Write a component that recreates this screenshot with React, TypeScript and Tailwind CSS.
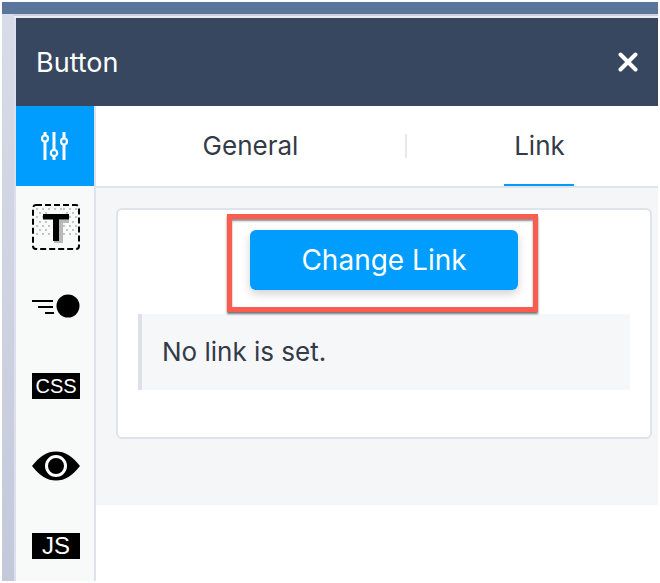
import React from 'react';

const SlidersIcon = () => (
  <svg width="30" height="30" viewBox="0 0 30 30" fill="none" stroke="white" strokeWidth="3">
    <path d="M5 1v3M5 11v18M14 1v18M14 25v4M24 1v6M24 14v15" />
    <circle cx="5" cy="7.5" r="3" strokeWidth="2.2" />
    <circle cx="14" cy="22" r="3.2" strokeWidth="2.2" />
    <circle cx="24" cy="10.5" r="3" strokeWidth="2.2" />
  </svg>
);

const dotRows = [4, 8, 12, 17, 21, 25, 29];

const TextIcon = () => (
  <svg width="48" height="46" viewBox="0 0 48 46" fill="none">
    <rect x="1" y="1" width="46" height="44" rx="3" stroke="black" strokeWidth="2" strokeDasharray="6 3" />
    {dotRows.map((y, i) =>
      (i % 2 === 0 ? [4, 10, 16, 31, 37, 43] : [7, 13, 34, 40]).map((x) => (
        <rect key={`${x}-${y}`} x={x} y={y} width="2" height="2" fill="#c4c4c4" />
      ))
    )}
    {[22, 28].map((x) => (
      <rect key={x} x={x} y="4" width="2" height="2" fill="#c4c4c4" />
    ))}
    <path d="M27 15.5h10V19h-6v20h-9v-2h5z" fill="#b8b8b8" />
    <path d="M11 10h26v5.5H27V37h-6V15.5H11z" fill="black" />
  </svg>
);

const SpeedIcon = () => (
  <svg width="48" height="24" viewBox="0 0 48 24" fill="black">
    <rect x="0" y="6" width="21" height="2" />
    <rect x="6" y="12" width="15" height="2" />
    <rect x="13" y="18" width="9" height="2" />
    <circle cx="36" cy="12" r="11.5" />
  </svg>
);

const EyeIcon = () => (
  <svg width="48" height="30" viewBox="0 0 48 30">
    <path d="M0 15C8 5 15 0.5 24 0.5S40 5 48 15C40 25 33 29.5 24 29.5S8 25 0 15z" fill="black" />
    <circle cx="24" cy="15" r="9.5" fill="none" stroke="white" strokeWidth="3" />
  </svg>
);

function App() {
  return (
    <div className="h-[583px] w-[660px] overflow-hidden bg-white px-[2px] pt-[2px] font-['Inter',sans-serif]">
      <div className="h-3 bg-[#5a769c]" />
      <div className="flex h-[567px]">
        <div className="w-3 bg-gradient-to-b from-[#d8dce8] to-[#c4c9da]" />
        <div className="flex flex-1 flex-col bg-[#dde0ec] pl-[2px]">
          <div className="-ml-[2px] h-[2px] bg-[#cfd2dc]" />
          <div className="-ml-[2px] h-[2px] bg-[#eceef3]" />
          <div className="flex h-[88px] items-center justify-between bg-[#37475f] px-5 text-white">
            <span className="text-[27px] leading-none">Button</span>
            <svg width="20" height="20" viewBox="0 0 20 20" stroke="white" strokeWidth="4" strokeLinecap="round">
              <path d="M2.5 2.5l15 15M17.5 2.5l-15 15" />
            </svg>
          </div>
          <div className="flex flex-1 bg-white">
            <div className="w-20 border-r-2 border-[#dfe3ed] bg-[#f8fafa]">
              <div className="flex h-20 items-center justify-center bg-[#009dff]">
                <SlidersIcon />
              </div>
              <div className="flex flex-col items-center pl-[2px]">
                <div className="mt-[18px]"><TextIcon /></div>
                <div className="mt-[44px]"><SpeedIcon /></div>
                <div className="mt-[55px] flex h-[26px] w-12 items-center justify-center bg-black font-['Liberation_Sans',sans-serif] text-[20px] leading-none text-white">
                  CSS
                </div>
                <div className="mt-[52px]"><EyeIcon /></div>
                <div className="mt-[52px] flex h-[26px] w-12 items-center justify-center bg-black font-['Liberation_Sans',sans-serif] text-[24px] leading-none text-white">
                  JS
                </div>
              </div>
            </div>
            <div className="flex-1">
              <div className="flex h-[82px] items-center border-b-2 border-[#dfe3ed] text-[26px] leading-none text-[#333a48]">
                <div className="flex h-full w-[309px] items-center justify-center">General</div>
                <div className="h-6 w-[2px] bg-[#e6e8ee]" />
                <div className="relative flex h-full flex-1 items-center justify-center pl-[14px]">
                  Link
                  <div className="absolute bottom-0 left-[97px] h-[2px] w-[70px] bg-[#009dff]" />
                </div>
              </div>
              <div className="h-[317px] bg-[#f4f6f8] pl-5 pr-[6px] pt-5">
                <div className="relative h-[231px] rounded-md border-2 border-[#dfe3ed] bg-white px-5 pt-5">
                  <button className="mx-auto block h-[60px] w-[268px] rounded-md bg-[#009dff] text-[28px] text-white shadow-[0_4px_10px_rgba(0,0,0,0.18)]">
                    Change Link
                  </button>
                  <div className="absolute left-[109px] top-[4px] h-[98px] w-[311px] border-[5px] border-[#fa5c50] shadow-[0_2px_2px_rgba(0,0,0,0.55),inset_0_2px_2px_rgba(0,0,0,0.45)]" />
                  <div className="mt-6 flex h-[76px] items-center border-l-4 border-[#dde0e8] bg-[#f6f7f9] pl-5 text-[26px] leading-none text-[#333a48]">
                    No link is set.
                  </div>
                </div>
              </div>
            </div>
          </div>
        </div>
      </div>
    </div>
  );
}

export default App;
